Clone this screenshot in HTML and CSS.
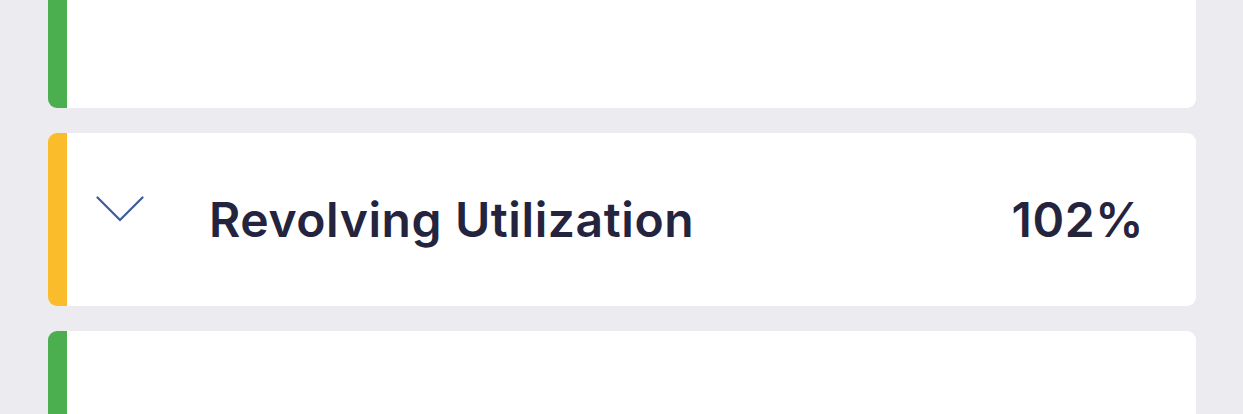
FILE: index.html
```html
<!DOCTYPE html>
<html lang="en">
<head>
<meta charset="utf-8">
<link rel="stylesheet" href="styles.css">
</head>
<body>
<div class="list">
  <div class="card card--green"></div>
  <div class="card card--yellow">
    <div class="row">
      <svg class="chevron" width="48" height="26" viewBox="0 0 48 26" aria-hidden="true">
        <path d="M1.5 1.5 L24 24 L46.5 1.5" fill="none" stroke="#3d5a9c" stroke-width="2.2" stroke-linejoin="miter" stroke-linecap="round"/>
      </svg>
      <span class="label">Revolving Utilization</span>
      <span class="value">102%</span>
    </div>
  </div>
  <div class="card card--green"></div>
</div>
</body>
</html>
```
FILE: styles.css
```css
html, body {
  margin: 0;
  padding: 0;
  background: #ececf0;
  font-family: Inter, "Noto Sans", sans-serif;
}
.list {
  display: flex;
  flex-direction: column;
  gap: 25px;
  margin-top: -65px;
  padding: 0 47px 0 48px;
}
.card {
  height: 173px;
  background: #ffffff;
  border-radius: 9px;
  border-left: 19px solid #4caf50;
  box-sizing: border-box;
  display: flex;
  align-items: center;
}
.card--green { border-left-color: #4caf4f; }
.card--yellow { border-left-color: #fbbc2c; }
.row {
  display: flex;
  align-items: center;
  width: 100%;
  padding: 0 52px 0 29px;
  box-sizing: border-box;
}
.chevron {
  flex: none;
  margin-top: -22px;
  margin-right: 65px;
}
.label {
  flex: 1;
  font-size: 48px;
  font-weight: 600;
  color: #24243f;
  letter-spacing: 0.6px;
}
.value {
  font-size: 48px;
  font-weight: 600;
  color: #24243f;
  letter-spacing: 0.6px;
}
```
